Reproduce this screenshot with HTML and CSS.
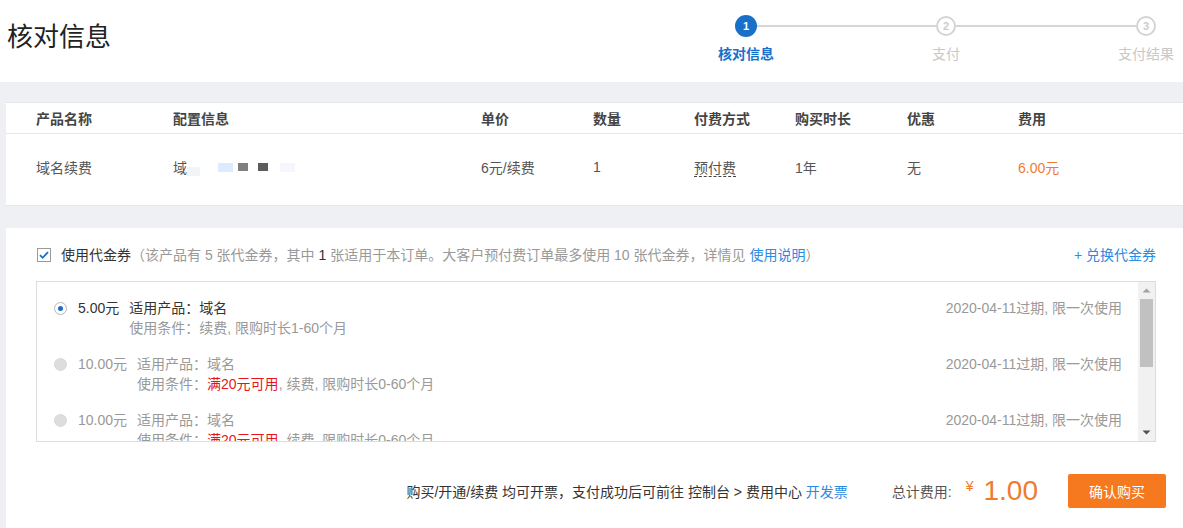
FILE: index.html
```html
<!DOCTYPE html>
<html lang="zh-CN">
<head>
  <meta charset="UTF-8">
  <title>核对信息</title>
  <link rel="stylesheet" href="styles.css">
</head>
<body>
  <header class="topbar">
    <h1 class="title">核对信息</h1>
    <ol class="steps">
      <li class="step active"><span class="step-dot">1</span><span class="step-label">核对信息</span></li>
      <li class="step-line"></li>
      <li class="step"><span class="step-dot">2</span><span class="step-label">支付</span></li>
      <li class="step-line"></li>
      <li class="step"><span class="step-dot">3</span><span class="step-label">支付结果</span></li>
    </ol>
  </header>

  <section class="order-card">
    <div class="order-row order-head">
      <div>产品名称</div>
      <div>配置信息</div>
      <div>单价</div>
      <div>数量</div>
      <div>付费方式</div>
      <div>购买时长</div>
      <div>优惠</div>
      <div>费用</div>
    </div>
    <div class="order-row order-body">
      <div>域名续费</div>
      <div class="masked">域<i class="px px-a"></i><i class="px px-b"></i><i class="px px-c"></i><i class="px px-d"></i><i class="px px-e"></i><i class="px px-f"></i></div>
      <div>6元/续费</div>
      <div>1</div>
      <div><span class="dashed">预付费</span></div>
      <div>1年</div>
      <div>无</div>
      <div class="cost">6.00元</div>
    </div>
  </section>

  <section class="pay-card">
    <div class="voucher-head">
      <label class="use-voucher">
        <svg class="checkbox" width="14" height="14" viewBox="0 0 14 14">
          <rect x="0.5" y="0.5" width="13" height="13" fill="#fff" stroke="#9a9a9a"/>
          <path d="M3 7.2l2.6 2.6L11 4.2" fill="none" stroke="#1d6fc4" stroke-width="1.8"/>
        </svg>
        <span class="use-label">使用代金券</span>
        <span class="use-note">（该产品有 5 张代金券，其中 <b>1</b> 张适用于本订单。大客户预付费订单最多使用 10 张代金券，详情见 <a href="#">使用说明</a>）</span>
      </label>
      <a class="exchange" href="#">+ 兑换代金券</a>
    </div>

    <div class="voucher-box">
      <div class="voucher-list">
        <div class="voucher selected">
          <span class="radio"></span>
          <span class="amount">5.00元</span>
          <div class="voucher-info">
            <div class="scope">适用产品：域名</div>
            <div class="cond">使用条件：续费, 限购时长1-60个月</div>
          </div>
          <span class="expire">2020-04-11过期, 限一次使用</span>
        </div>
        <div class="voucher">
          <span class="radio"></span>
          <span class="amount">10.00元</span>
          <div class="voucher-info">
            <div class="scope">适用产品：域名</div>
            <div class="cond">使用条件：<em>满20元可用</em>, 续费, 限购时长0-60个月</div>
          </div>
          <span class="expire">2020-04-11过期, 限一次使用</span>
        </div>
        <div class="voucher">
          <span class="radio"></span>
          <span class="amount">10.00元</span>
          <div class="voucher-info">
            <div class="scope">适用产品：域名</div>
            <div class="cond">使用条件：<em>满20元可用</em>, 续费, 限购时长0-60个月</div>
          </div>
          <span class="expire">2020-04-11过期, 限一次使用</span>
        </div>
      </div>
      <div class="scrollbar">
        <svg class="scroll-btn" width="17" height="17" viewBox="0 0 17 17"><path d="M4.5 10.5h8l-4-4z" fill="#a3a3a3"/></svg>
        <div class="scroll-track"><div class="scroll-thumb"></div></div>
        <svg class="scroll-btn" width="17" height="17" viewBox="0 0 17 17"><path d="M4.5 6.5h8l-4 4z" fill="#505050"/></svg>
      </div>
    </div>

    <div class="checkout">
      <span class="invoice">购买/开通/续费 均可开票，支付成功后可前往 控制台 &gt; 费用中心 <a href="#">开发票</a></span>
      <span class="total-label">总计费用:</span>
      <span class="total"><span class="yen">¥</span>1.00</span>
      <button class="buy">确认购买</button>
    </div>
  </section>
</body>
</html>
```

FILE: styles.css
```css
body {
  margin: 0;
  background: #eff0f3;
  font-family: "Liberation Sans", "Noto Sans CJK SC", sans-serif;
  font-size: 14px;
  color: #333;
  overflow: hidden;
}
a {
  color: #2b8ae2;
  text-decoration: none;
}

/* top bar */
.topbar {
  display: flex;
  justify-content: space-between;
  height: 82px;
  background: #fff;
}
.title {
  margin: 20px 0 0 7px;
  font-size: 26px;
  font-weight: normal;
  line-height: 34px;
  color: #222;
}
.steps {
  display: flex;
  align-items: flex-start;
  list-style: none;
  margin: 0;
  padding: 15px 7px 0 0;
}
.step {
  width: 60px;
  display: flex;
  flex-direction: column;
  align-items: center;
}
.step-dot {
  position: relative;
  z-index: 1;
  box-sizing: border-box;
  width: 20px;
  height: 20px;
  margin: 1px 0;
  border: 2px solid #d4d4d4;
  border-radius: 50%;
  background: #fff;
  color: #ccc;
  font-size: 11px;
  font-weight: bold;
  line-height: 16px;
  text-align: center;
}
.step.active .step-dot {
  width: 22px;
  height: 22px;
  margin: 0;
  border: none;
  background: #1870c9;
  color: #fff;
  line-height: 22px;
}
.step-label {
  margin-top: 7px;
  line-height: 20px;
  white-space: nowrap;
  color: #c8c8c8;
}
.step.active .step-label {
  color: #1870c9;
  font-weight: bold;
}
.step-line {
  flex: none;
  width: 180px;
  height: 2px;
  margin: 10px -20px 0;
  background: #d6d6d6;
}

/* order table */
.order-card {
  margin: 20px 0 0 6px;
  background: #fff;
  border-top: 1px solid #e6e7ea;
  border-bottom: 1px solid #e6e7ea;
}
.order-row {
  display: grid;
  grid-template-columns: 137px 308px 112px 101px 101px 112px 111px 1fr;
  align-items: center;
  padding-left: 30px;
}
.order-head {
  height: 30px;
  border-bottom: 1px solid #e6e7ea;
  font-weight: bold;
  color: #444;
}
.order-body {
  height: 66px;
  padding-bottom: 5px;
  color: #555;
}
.dashed {
  border-bottom: 1px dashed #444;
}
.cost {
  color: #ef7b34;
}
.masked {
  display: flex;
  align-items: center;
}
.px {
  display: inline-block;
  width: 13px;
  height: 9px;
}
.px-a { background: #f1f5f8; margin-top: 8px; }
.px-b { background: #fff; width: 18px; }
.px-c { background: #dcebfd; width: 15px; }
.px-d { background: #808080; width: 10px; margin: 0 10px 0 5px; height: 8px; }
.px-e { background: #5c5c5c; width: 10px; height: 8px; }
.px-f { background: #f7f6fc; width: 15px; margin-left: 12px; }

/* vouchers */
.pay-card {
  margin: 22px 0 0 6px;
  padding: 17px 27px 0 30px;
  height: 300px;
  background: #fff;
}
.voucher-head {
  display: flex;
  justify-content: space-between;
  align-items: center;
  line-height: 20px;
}
.use-voucher {
  display: flex;
  align-items: center;
}
.checkbox {
  margin: 0 10px 0 1px;
}
.use-label {
  color: #333;
}
.use-note {
  color: #999;
}
.use-note b {
  font-weight: normal;
  color: #333;
}
.voucher-box {
  display: flex;
  box-sizing: border-box;
  height: 161px;
  margin-top: 16px;
  border: 1px solid #dcdcdc;
}
.voucher-list {
  flex: 1;
  overflow: hidden;
}
.scrollbar {
  display: flex;
  flex-direction: column;
  width: 17px;
  background: #f1f1f1;
}
.scroll-btn {
  display: block;
  flex: none;
}
.scroll-track {
  flex: 1;
}
.scroll-thumb {
  height: 68px;
  margin: 0 2px;
  background: #c1c1c1;
}
.voucher {
  display: flex;
  align-items: flex-start;
  height: 40px;
  margin-top: 16px;
  padding: 0 16px 0 17px;
  line-height: 20px;
  color: #999;
}
.radio {
  box-sizing: border-box;
  width: 13px;
  height: 13px;
  margin: 4px 11px 0 0;
  border: 1px solid #d8d8d8;
  border-radius: 50%;
  background: #ddd;
}
.voucher.selected .radio {
  position: relative;
  border-color: #b8b8b8;
  background: #fff;
}
.voucher.selected .radio::after {
  content: "";
  position: absolute;
  left: 3px;
  top: 3px;
  width: 5px;
  height: 5px;
  border-radius: 50%;
  background: #1870c9;
}
.amount {
  margin-right: 10px;
}
.voucher.selected .amount,
.voucher.selected .scope {
  color: #333;
}
.cond em {
  font-style: normal;
  color: #e5161a;
}
.expire {
  margin-left: auto;
}

/* checkout */
.checkout {
  display: flex;
  justify-content: flex-end;
  align-items: center;
  height: 34px;
  margin: 32px -10px 0 0;
}
.invoice {
  color: #333;
}
.total-label {
  margin-left: 44px;
  color: #555;
}
.total {
  margin-left: 14px;
  font-size: 28px;
  color: #f07b2d;
}
.yen {
  position: relative;
  top: -9px;
  margin-right: 10px;
  font-size: 14px;
}
.buy {
  width: 98px;
  height: 34px;
  margin-left: 30px;
  border: none;
  border-radius: 2px;
  background: #f6791f;
  color: #fff;
  font-family: inherit;
  font-size: 14px;
}
```
